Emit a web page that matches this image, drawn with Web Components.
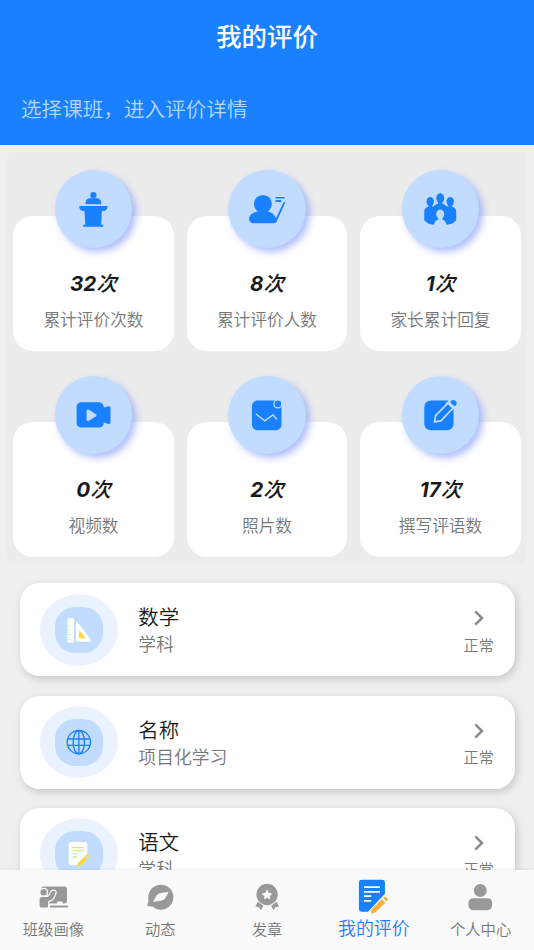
<!DOCTYPE html>
<html lang="zh-CN">
<head>
<meta charset="utf-8">
<title>我的评价</title>
<style>
html,body{margin:0;height:100%;overflow:hidden}
body{background:#efefef;font-family:"Liberation Sans","Noto Sans CJK SC",sans-serif}
</style>
</head>
<body>
<review-app></review-app>
<script>
const FONT = '"Noto Sans CJK SC",sans-serif';
function define(name, html, setup) {
  const t = document.createElement('template');
  t.innerHTML = html;
  customElements.define(name, class extends HTMLElement {
    constructor() {
      super();
      this.attachShadow({mode: 'open'}).append(t.content.cloneNode(true));
    }
    connectedCallback() { if (setup) setup(this, this.shadowRoot); }
  });
}
const B = '#1980ff', L = '#c2dcff', G = '#999';

define('page-header', `
<style>
:host{display:flex;flex-direction:column;box-sizing:border-box;height:144.7px;flex:none;background:#1980ff;color:#fff}
h1{margin:0;padding-top:15px;text-align:center;font-size:25.4px;font-weight:500;line-height:40px}
p{margin:0;padding:33px 0 0 21px;font-size:20.6px;line-height:40px;color:#b5d6ff;font-weight:350}
</style>
<h1><slot name="title"></slot></h1><p><slot></slot></p>`);

define('stat-card', `
<style>
:host{display:flex;flex-direction:column;align-items:center;height:135.3px;border-radius:20px;background:#fff}
.disc{width:77.8px;height:77.8px;margin-top:-45.8px;border-radius:50%;background:#c2dcff;box-shadow:4px 4px 7px rgba(100,125,255,.5);flex:none}
::slotted(svg){display:block;width:100%;height:100%}
.n{font:italic 650 20.6px/30px Inter,"Noto Sans CJK SC",sans-serif;color:#1a1a1a;margin-top:21px}
.n i{font-weight:500}
.l{font-size:16.7px;line-height:24px;color:#777;margin-top:8px}
</style>
<div class="disc"><slot></slot></div><div class="n"><span></span><i>次</i></div><div class="l"></div>`,
(h, r) => { r.querySelector('span').textContent = h.getAttribute('count'); r.querySelector('.l').textContent = h.getAttribute('label'); });

define('stat-grid', `
<style>
:host{display:grid;grid-template-columns:repeat(3,1fr);gap:71px 12.9px;box-sizing:border-box;height:413px;margin:6.3px 7px 0;padding:64.9px 6.2px 0;border-radius:7px;background:#ececec;align-content:start;flex:none}
</style><slot></slot>`);

define('course-row', `
<style>
:host{display:flex;box-sizing:border-box;height:93px;flex:none;background:#fff;border-radius:20px;box-shadow:2px 3px 8px rgba(0,0,0,.17);padding:0 20.4px}
.pic{width:77.7px;height:72.3px;margin-top:10.4px;border-radius:39px/36px;background:#ebf2ff;flex:none;display:grid;place-items:center}
.tile{grid-area:1/1;width:47.4px;height:46.7px;border-radius:20px;background:#c2dcff}
::slotted(svg){grid-area:1/1;width:77.7px;height:72.3px;display:block}
.txt{flex:1;margin-left:20.6px;padding-top:18px}
.t{font-size:20.4px;line-height:30px;color:#1a1a1a}
.s{font-size:17.8px;line-height:24px;color:#777}
.end{display:flex;flex-direction:column;align-items:center;width:31px}
.end svg{width:10px;height:16px;margin-top:27px}
.end span{font-size:15.2px;line-height:22px;color:#777;margin-top:6.5px;white-space:nowrap}
</style>
<div class="pic"><div class="tile"></div><slot></slot></div>
<div class="txt"><div class="t"></div><div class="s"></div></div>
<div class="end"><svg viewBox="0 0 10 16"><path d="M1.3 1.3 8 8l-6.7 6.7" fill="none" stroke="#8a8a8a" stroke-width="2.5"/></svg><span></span></div>`,
(h, r) => { r.querySelector('.t').textContent = h.getAttribute('name'); r.querySelector('.s').textContent = h.getAttribute('kind'); r.querySelector('.end span').textContent = h.getAttribute('state'); });

define('course-list', `
<style>:host{display:flex;flex-direction:column;gap:19.3px;padding:19.4px 19.4px 0 19.7px;flex:1;min-height:0;overflow:hidden}</style><slot></slot>`);

define('tab-item', `
<style>
:host{display:flex;flex-direction:column;align-items:center;flex:1 1 0;min-width:0;color:#777;font-size:15.3px;line-height:22px}
::slotted(svg){display:block;width:106.8px;height:45px}
span{margin-top:2.5px;white-space:nowrap}
:host([active]) span{font-size:17.9px;margin-top:1px;color:#1980ff}
</style><slot></slot><span></span>`,
(h, r) => { r.querySelector('span').textContent = h.getAttribute('label'); });

define('tab-bar', `
<style>:host{display:flex;height:80.5px;flex:none;background:#fafafa;box-shadow:0 -1px 2px rgba(0,0,0,.05);z-index:1}</style><slot></slot>`);

define('review-app', `
<style>:host{display:flex;flex-direction:column;width:534px;height:950px;overflow:hidden;background:#efefef;font-family:${FONT};font-weight:350}</style>
<page-header><span slot="title">我的评价</span>选择课班，进入评价详情</page-header>
<stat-grid>
<stat-card count="32" label="累计评价次数"><svg viewBox="164 60 234 234" fill="${B}"><circle cx="279.500" cy="136" r="9.500"/><path d="M256 163v-7q2-10 13-11h21q11 1 13 11v7z"/><path d="M237 168h85v5q-2 9-11 10h-6l-2 42h6v6h-60v-6h6l-2-42h-6q-8-1-10-11z"/></svg></stat-card>
<stat-card count="8" label="累计评价人数"><svg viewBox="144 60 234 234" fill="${B}"><circle cx="249" cy="162" r="27"/><path d="M207 207q2-19 31-24h22q22 4 28 22l23-48q2-3 5-1l-1 5-25 55q-3 4-8 4h-63q-10 0-12-13zM287 141h27v5h-27zM287 150h17v6h-17z"/></svg></stat-card>
<stat-card count="1" label="家长累计回复"><svg viewBox="143 60 234 234"><g fill="${B}"><ellipse cx="228" cy="155" rx="11" ry="14"/><ellipse cx="258" cy="145" rx="12" ry="15"/><ellipse cx="288" cy="155" rx="11" ry="14"/><path d="M210 183q1-9 13-13v-8h10v8l6-1q4-4 13-8v-8h12v8q9 3 13 8l6 1v-8h10v8q12 4 13 13v28q-10 12-28 14h-40q-18-2-28-14z"/></g><g fill="${L}"><ellipse cx="258" cy="193" rx="12" ry="14"/><path d="M252 202h12v7q11 3 13 17h-38q2-14 13-17z"/></g></svg></stat-card>
<stat-card count="0" label="视频数"><svg viewBox="164 35 234 234" fill="${B}"><path d="M242 114h57q10 1 12 16l14-4q6-1 6 5v43q0 6-6 5l-14-4q-1 13-12 15h-57q-13-1-13-15v-46q0-14 13-15z"/><path d="M259 140q0-6 6-4l22 14q4 3 0 6l-22 14q-6 2-6-4z" fill="${L}"/></svg></stat-card>
<stat-card count="2" label="照片数"><svg viewBox="144 35 234 234"><rect x="216" y="109" width="89" height="89" rx="17" fill="${B}"/><circle cx="294" cy="119" r="12" fill="${B}" stroke="${L}" stroke-width="4"/><path d="m228 149 27 21 24-18 12 13" fill="none" stroke="${L}" stroke-width="4"/></svg></stat-card>
<stat-card count="17" label="撰写评语数"><svg viewBox="143 35 234 234"><path d="M232 109h51l15 20v48q0 21-20 21h-47q-21 0-21-21v-47q0-21 22-21z" fill="${B}"/><path d="m284 108 20 20-12 12-20-20z" fill="${L}"/><path d="m281 117 15 15-36 38-19 3 3-19z" fill="${B}" stroke="${L}" stroke-width="5"/><path d="m290 110 5-3q10 0 13 10l-3 6q-4 4-8 0l-7-7q-3-3 0-6z" fill="${B}"/></svg></stat-card>
</stat-grid>
<course-list>
<course-row name="数学" kind="学科" state="正常"><svg viewBox="120 71 233 217"><rect x="202" y="144" width="20" height="73" rx="4" fill="#fff"/><path d="M203 151h8m-8 7h5m-5 7h8m-8 7h5m-5 7h8m-8 7h5m-5 7h8m-8 7h5m-5 7h8" stroke="#c4ef91" stroke-width="2.500"/><path d="M228 157q2-7 6 0l38 51q3 5-3 6h-38q-3 0-3-4z" fill="#fff"/><path d="M237 178v26h20z" fill="#ffd83d"/></svg></course-row>
<course-row name="名称" kind="项目化学习" state="正常"><svg viewBox="120 63 233 217" fill="none" stroke="${B}" stroke-width="4"><circle cx="236.500" cy="171.500" r="35"/><ellipse cx="236.500" cy="171.500" rx="17" ry="35"/><path d="M236.500 136v71M204 162h65M204 181h65"/></svg></course-row>
<course-row name="语文" kind="学科" state="正常"><svg viewBox="120 399 233 217"><path d="M212 471h44q6 0 6 6v29l-31 34h-19q-6 0-6-6v-57q0-6 6-6z" fill="#fff"/><path d="M217 488h34M217 497h34M217 506h16M217 516h14" stroke="#c4ef91" stroke-width="4"/><path d="m233 535 20-20 8 8-20 20-10 2zM256 512l3-4q7 0 9 7l-4 5z" fill="#ffd83d"/></svg></course-row>
</course-list>
<tab-bar>
<tab-item label="班级画像"><svg viewBox="0 28.500 320.400 135"><path d="M131 78h63q7 0 7 7v37q0 7-7 7h-50v-40q-6-9-21-6 2-5 8-5z" fill="${G}"/><g fill="${G}" stroke="#fafafa" stroke-width="3.500"><circle cx="131" cy="95" r="11.500"/><path d="M117 117q1-9 10-9h13q6 0 11-13l3-4q6-4 12-1 4 3 2 8l-4 10q-4 12-18 15v14q0 6-6 6h-17q-6 0-6-7z"/></g><path d="M171 123h17v10h-17z" fill="#fafafa"/><path d="M150 135h54v6h-54z" fill="${G}"/></svg></tab-item>
<tab-item label="动态"><svg viewBox="320.400 28.500 320.400 135"><circle cx="482" cy="110" r="37.500" fill="${G}"/><path d="M445 108q2 12-4 27 4 4 20 2" fill="${G}"/><path d="m460 123 10-18q3-4 10-6l24-4-10 18q-3 4-10 6z" fill="#fafafa" stroke="#fafafa" stroke-width="2" stroke-linejoin="round"/></svg></tab-item>
<tab-item label="发章"><svg viewBox="640.800 28.500 320.400 135" fill="${G}"><path fill-rule="evenodd" d="M800 70a32 32 0 1 1 0 64 32 32 0 0 1 0-64zm0 16-5 11-11 2 8 8-1 10 9-5 10 5-2-10 8-8-11-2z"/><path d="m772 124 17 12-7 13-6-9-11-2zM829 124l-17 12 7 13 6-9 11-2z"/></svg></tab-item>
<tab-item label="我的评价" active><svg viewBox="61.200 28.500 320.400 135"><path d="M186 58h61q9 0 9 9v33l-51 54h-18q-9 0-9-9V67q0-9 8-9z" fill="${B}"/><path d="M193 80h48M193 94h48M193 107h22M193 121h22" stroke="#fff" stroke-width="5"/><path d="m216 146 31-30 10 11-30 29-13 4zM251 112l4-3q8-1 10 8l-5 6z" fill="#ffae3d"/></svg></tab-item>
<tab-item label="个人中心"><svg viewBox="381.600 28.500 320.400 135" fill="${G}"><circle cx="541.500" cy="90" r="19.500"/><rect x="506" y="113" width="71" height="36" rx="14"/></svg></tab-item>
</tab-bar>`);
</script>
</body>
</html>
